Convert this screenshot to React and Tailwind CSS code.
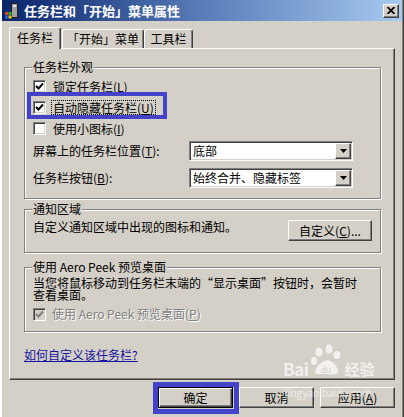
import React from "react";

const raised =
  "border border-t-white border-l-white border-r-[#404040] border-b-[#404040] shadow-[inset_-1px_-1px_0_#808080]";
const sunken =
  "border border-t-[#808080] border-l-[#808080] border-r-white border-b-white shadow-[inset_1px_1px_0_#404040,inset_-1px_-1px_0_#d4d0c8]";
const etched =
  "border border-[#808080] shadow-[inset_1px_1px_0_#fff,1px_1px_0_#fff]";

function Key({ k }) {
  return (
    <span>
      (<span className="underline">{k}</span>)
    </span>
  );
}

function Checkbox({ checked, disabled }) {
  return (
    <div
      className={`w-[13px] h-[13px] shrink-0 flex items-center justify-center ${sunken} ${
        disabled ? "bg-[#d4d0c8]" : "bg-white"
      }`}
    >
      {checked && (
        <svg width="9" height="9" viewBox="0 0 9 9">
          <path
            d="M1 4 L3.5 6.5 L8 1.5"
            fill="none"
            stroke={disabled ? "#808080" : "#000"}
            strokeWidth="2"
          />
        </svg>
      )}
    </div>
  );
}

function CheckRow({ label, k, checked, focus }) {
  return (
    <div className="h-[21px] flex items-center gap-[6px]">
      <Checkbox checked={checked} />
      <span
        className={`leading-[13px] px-px ${
          focus ? "outline outline-1 outline-dotted outline-black" : ""
        }`}
      >
        {label}
        <Key k={k} />
      </span>
    </div>
  );
}

function Combo({ value }) {
  return (
    <div className={`w-[164px] h-[20px] bg-white flex items-center ${sunken} p-[1px]`}>
      <span className="flex-1 pl-[2px] leading-[14px]">{value}</span>
      <div className={`w-[16px] h-[16px] bg-[#d4d0c8] flex items-center justify-center ${raised}`}>
        <svg width="7" height="4" viewBox="0 0 7 4">
          <path d="M0 0 H7 L3.5 4 Z" fill="#000" />
        </svg>
      </div>
    </div>
  );
}

function Group({ title, className, children }) {
  return (
    <div className={`relative w-[357px] ${etched} ${className}`}>
      <span className="absolute -top-[8px] left-[7px] bg-[#d4d0c8] px-[1px] leading-[14px]">
        {title}
      </span>
      {children}
    </div>
  );
}

function Button({ children, isDefault, className = "" }) {
  return (
    <div
      className={`w-[75px] h-[21px] flex items-center justify-center leading-[14px] ${
        isDefault
          ? "border border-black shadow-[inset_1px_1px_0_#fff,inset_-1px_-1px_0_#404040,inset_-2px_-2px_0_#808080]"
          : raised
      } ${className}`}
    >
      {children}
    </div>
  );
}

function TitleIcon() {
  return (
    <svg width="16" height="16" viewBox="0 0 16 16">
      <rect x="7.5" y="0.5" width="6" height="14" fill="#a0a0a0" stroke="#202020" />
      <rect x="9" y="2" width="3" height="2" fill="#e0e0e0" />
      <rect x="1" y="9" width="3" height="3" fill="#e84020" />
      <rect x="4.5" y="9" width="3" height="3" fill="#40b020" />
      <rect x="1" y="12.5" width="3" height="3" fill="#2060e0" />
      <rect x="4.5" y="12.5" width="3" height="3" fill="#f0c010" />
    </svg>
  );
}

export default function App() {
  return (
    <div className="relative w-[404px] h-[417px] overflow-hidden bg-[#d4d0c8] text-[12px] text-black font-['Noto_Sans_CJK_SC','Noto_Sans',sans-serif] shadow-[inset_2px_0_0_#fff,inset_-1px_0_0_#404040,inset_-2px_0_0_#808080]">
      {/* Title bar */}
      <div className="h-[21px] mx-[2px] bg-linear-to-r from-[#0a246a] via-[#5a7cb8] to-[#a6caf0] flex items-center pl-[2px] pr-[3px]">
        <TitleIcon />
        <span className="ml-[4px] text-white font-bold text-[13px] leading-[16px]">
          任务栏和「开始」菜单属性
        </span>
        <div className={`ml-auto w-[16px] h-[14px] bg-[#d4d0c8] flex items-center justify-center ${raised}`}>
          <svg width="8" height="7" viewBox="0 0 8 7">
            <path d="M0.5 0 L7.5 7 M7.5 0 L0.5 7" stroke="#000" strokeWidth="1.8" />
          </svg>
        </div>
      </div>

      {/* Tabs */}
      <div className="mt-[6px] ml-[9px] h-[21px] flex items-end">
        <div className="relative z-10 w-[52px] h-[22px] -mb-px bg-[#d4d0c8] border-t border-l border-r border-t-white border-l-white border-r-[#404040] rounded-t-[3px] shadow-[inset_-1px_0_0_#808080] flex items-center justify-center pb-[2px]">
          任务栏
        </div>
        <div className="ml-px w-[82px] h-[19px] border-t border-l border-r border-t-white border-l-white border-r-[#404040] rounded-t-[3px] shadow-[inset_-1px_0_0_#808080] flex items-center justify-center">
          「开始」菜单
        </div>
        <div className="w-[49px] h-[19px] border-t border-l border-r border-t-white border-l-white border-r-[#404040] rounded-t-[3px] shadow-[inset_-1px_0_0_#808080] flex items-center justify-center">
          工具栏
        </div>
      </div>

      {/* Tab panel */}
      <div className={`ml-[9px] w-[386px] h-[332px] pt-[18px] pl-[14px] ${raised}`}>
        <Group title="任务栏外观" className="h-[132px] pt-[8px] pl-[8px]">
          <CheckRow label="锁定任务栏" k="L" checked />
          <CheckRow label="自动隐藏任务栏" k="U" checked focus />
          <CheckRow label="使用小图标" k="I" />
          <div className="mt-[2px] flex items-center">
            <span className="w-[156px]">
              屏幕上的任务栏位置<Key k="T" />:
            </span>
            <Combo value="底部" />
          </div>
          <div className="mt-[7px] flex items-center">
            <span className="w-[156px]">
              任务栏按钮<Key k="B" />:
            </span>
            <Combo value="始终合并、隐藏标签" />
          </div>
        </Group>

        <Group title="通知区域" className="mt-[10px] h-[44px] pt-[10px] pl-[8px] pr-[8px]">
          <div className="flex items-start justify-between">
            <span className="leading-[14px]">自定义通知区域中出现的图标和通知。</span>
            <div className={`w-[84px] h-[21px] flex items-center justify-center ${raised}`}>
              自定义<Key k="C" />...
            </div>
          </div>
        </Group>

        <Group title="使用 Aero Peek 预览桌面" className="mt-[14px] h-[65px] pt-[9px] pl-[8px]">
          <p className="leading-[12px]">
            当您将鼠标移动到任务栏末端的“显示桌面”按钮时，会暂时
            <br />
            查看桌面。
          </p>
          <div className="mt-[6px] h-[14px] flex items-center gap-[6px]">
            <Checkbox checked disabled />
            <span className="text-[#808080] [text-shadow:1px_1px_0_#fff]">
              使用 Aero Peek 预览桌面<Key k="P" />
            </span>
          </div>
        </Group>

        <div className="mt-[16px] leading-[14px] text-[#1414a0] underline">如何自定义该任务栏?</div>
      </div>

      {/* Dialog buttons */}
      <div className="mt-[7px] pr-[9px] flex justify-end gap-[6px]">
        <Button isDefault>确定</Button>
        <Button>取消</Button>
        <Button>
          应用<Key k="A" />
        </Button>
      </div>

      {/* Annotation highlights */}
      <div className="absolute left-[27px] top-[92px] w-[140px] h-[27px] border-[4px] border-[#4343c9]" />
      <div className="absolute left-[153px] top-[382px] w-[86px] h-[32px] border-[5px] border-[#4343c9]" />

      {/* Watermark */}
      <div className="absolute left-[283px] top-[344px] pointer-events-none text-white/70">
        <div className="flex items-end">
          <span className="text-[17px] font-bold leading-[18px] tracking-tight">Bai</span>
          <svg width="34" height="34" viewBox="0 0 34 34" className="mx-[1px]">
            <g fill="rgba(255,255,255,0.7)">
              <ellipse cx="9" cy="8" rx="3.5" ry="4.5" />
              <ellipse cx="19" cy="5" rx="3.5" ry="4.5" />
              <ellipse cx="27" cy="11" rx="3.5" ry="4" />
              <ellipse cx="4" cy="17" rx="3" ry="4" />
              <path d="M7 30 C3 30 6 21 14 17 C20 14 26 20 28 26 C29 31 24 31 17 30 Z" />
            </g>
            <text x="11" y="29" fontSize="9" fill="#d4d0c8" fontFamily="Liberation Sans">du</text>
          </svg>
          <span className="text-[15px] font-bold leading-[18px]">经验</span>
        </div>
        <div className="mt-[9px] ml-[2px] text-[10px] leading-[12px] text-white/60">jingyan.baidu.com</div>
      </div>
    </div>
  );
}
